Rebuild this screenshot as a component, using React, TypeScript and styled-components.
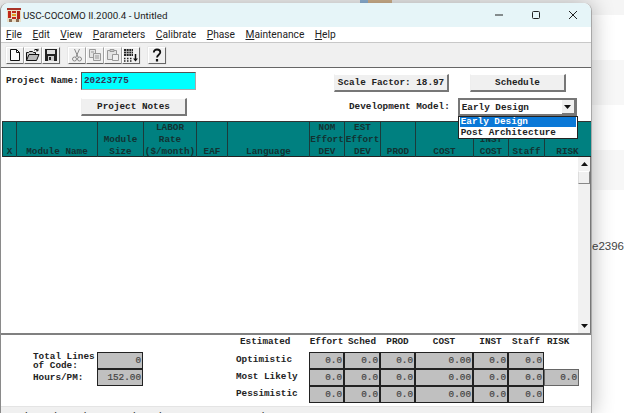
import React from "react";
import styled, { createGlobalStyle } from "styled-components";

const Global = createGlobalStyle`
  html, body { margin: 0; padding: 0; background: #fff; overflow: hidden; }
  * { box-sizing: border-box; }
`;

const mono = `"Liberation Mono", "Courier New", monospace`;
const ui = `Roboto, "Liberation Sans", sans-serif`;

const Desktop = styled.div`
  position: relative;
  width: 644px;
  height: 413px;
  overflow: hidden;
  padding-top: 3px;
  background:
    linear-gradient(to right, #8fb4d8 0 8px, #d3b48f 8px 32px, #eee 32px 100%) 360px 0 / 120px 3px no-repeat,
    linear-gradient(to bottom, #f5f5f5 0 15px, #fff 15px 60px, #f7f7f7 60px 105px, #fff 105px 150px, #f7f7f7 150px 190px, #fff 190px) 0 0 / 624px 100% no-repeat,
    #fff;
`;

const BehindText = styled.span`
  position: absolute;
  left: 592px;
  top: 240px;
  font: 11.5px "Liberation Sans", Arial, sans-serif;
  color: #444;
`;

const Window = styled.div`
  position: relative;
  width: 592px;
  display: flex;
  flex-direction: column;
  border-radius: 8px 8px 0 0;
  background: #fff;
  box-shadow: 0 0 22px rgba(0, 0, 0, 0.3);
  border-right: 1px solid #a8a8a8;
  border-left: 1px solid #8a8a8a;
`;

const TitleBar = styled.div`
  height: 24px;
  display: flex;
  align-items: center;
  background: #e6f5f8;
  border-radius: 8px 8px 0 0;
  padding-left: 6px;
  font: 9.8px ${ui};
  color: #222;
`;

const TitleText = styled.span`
  margin-left: 2px;
  flex: 1;
`;

const WinControls = styled.div`
  display: flex;
  align-items: center;
  gap: 27px;
  padding-right: 13px;
  svg { display: block; }
`;

const MenuBar = styled.div`
  height: 16px;
  display: flex;
  gap: 10.5px;
  align-items: center;
  padding-left: 5px;
  background: #fff;
  border-bottom: 1px solid #c8c8c8;
  font: 10.2px ${ui};
  color: #222;
  u { text-underline-offset: 1px; }
`;

const Toolbar = styled.div`
  height: 25px;
  display: flex;
  align-items: center;
  padding-left: 5px;
  background: #f0f0f0;
  border-bottom: 1px solid #666;
`;

const ToolGroup = styled.div<{ $after?: number }>`
  display: flex;
  margin-right: ${(p) => p.$after ?? 0}px;
`;

const ToolButton = styled.div`
  width: 18px;
  height: 17px;
  display: flex;
  align-items: center;
  justify-content: center;
  background: #f0f0f0;
  border: 1px solid;
  border-color: #fff #666 #666 #fff;
  box-shadow: 0 0 0 0.5px #ddd;
`;

const Form = styled.div`
  display: flex;
  flex-direction: column;
  gap: 6px;
  padding: 4px 0 5px 5px;
  font: bold 9.33px ${mono};
  color: #222;
`;

const FormRow = styled.div`
  display: flex;
  align-items: flex-start;
`;

const Label = styled.span<{ $width?: number; $left?: number; $top?: number }>`
  width: ${(p) => (p.$width ? `${p.$width}px` : "auto")};
  margin-left: ${(p) => p.$left ?? 0}px;
  margin-top: ${(p) => p.$top ?? 0}px;
  white-space: pre;
`;

const NameInput = styled.div`
  width: 115px;
  height: 18px;
  background: #00ffff;
  border: 1px solid;
  border-color: #555 #aaa #aaa #555;
  padding-left: 2px;
  line-height: 16px;
  color: #335;
`;

const PushButton = styled.div<{ $width: number; $left?: number; $top?: number }>`
  width: ${(p) => p.$width}px;
  height: 18px;
  margin-left: ${(p) => p.$left ?? 0}px;
  margin-top: ${(p) => p.$top ?? 0}px;
  display: flex;
  align-items: center;
  justify-content: center;
  background: #f0f0f0;
  border: 1px solid;
  border-color: #fff #777 #777 #eee;
  border-right-width: 2px;
  border-bottom-width: 2px;
`;

const Combo = styled.div`
  position: relative;
  width: 119px;
  height: 18px;
  margin-left: 8px;
  display: flex;
  align-items: center;
  justify-content: space-between;
  padding-left: 2px;
  background: #fff;
  border: 2px solid #777;
  font-size: 9.33px;
`;

const ComboArrow = styled.div`
  width: 13px;
  height: 14px;
  display: flex;
  align-items: center;
  justify-content: center;
  background: #f0f0f0;
  border-right: 1px solid #777;
  border-bottom: 1px solid #777;
`;

const DropDown = styled.div`
  position: absolute;
  top: 16px;
  left: -2px;
  width: 120px;
  height: 23px;
  z-index: 2;
  background: #fff;
  border: 1px solid #222;
  padding: 0 1px;
`;

const DropItem = styled.div<{ $selected?: boolean }>`
  height: 10px;
  margin-bottom: 1px;
  line-height: 10px;
  padding-left: 1px;
  background: ${(p) => (p.$selected ? "#0a78d7" : "transparent")};
  color: ${(p) => (p.$selected ? "#fff" : "#222")};
`;

const widths = [14, 81, 46, 53, 31, 82, 35, 36, 35, 58, 35, 36, 46];

const HeaderGrid = styled.div`
  display: grid;
  grid-template-columns: ${widths.map((w) => `${w}px`).join(" ")};
  height: 36px;
  margin-left: 1px;
  width: 589px;
  background: #008080;
  border-top: 1px solid #333;
  border-bottom: 1px solid #222;
  font: bold 9.33px/12px ${mono};
  color: #123232;
`;

const HeaderCell = styled.div`
  display: flex;
  flex-direction: column;
  justify-content: flex-end;
  align-items: center;
  text-align: center;
  white-space: pre;
  border-left: 1px solid #1c3a3a;
  overflow: visible;
`;

const ListArea = styled.div`
  display: flex;
  justify-content: flex-end;
  height: 178px;
  background: #fff;
  border-bottom: 2px solid #808080;
`;

const ScrollBar = styled.div`
  width: 13px;
  display: flex;
  flex-direction: column;
  background: #f1f1f1;
  border-right: 1px solid #777;
`;

const ScrollButton = styled.div`
  height: 14px;
  display: flex;
  align-items: center;
  justify-content: center;
`;

const ScrollThumb = styled.div`
  height: 13px;
  background: #f0f0f0;
  border: 1px solid;
  border-color: #fff #888 #888 #ddd;
`;

const ScrollSpace = styled.div`
  flex: 1;
`;

const Summary = styled.div`
  display: flex;
  height: 71px;
  font: bold 9.33px ${mono};
  color: #222;
`;

const Totals = styled.div`
  display: grid;
  grid-template-columns: 64px 46px;
  grid-auto-rows: 17px;
  margin: 17px 0 0 32px;
  width: 203px;
`;

const TotalLabel = styled.div`
  line-height: 9px;
  align-self: center;
  white-space: pre;
`;

const Estimates = styled.div`
  display: grid;
  grid-template-columns: 73px 35px 36px 35px 58px 35px 36px 35px;
  grid-auto-rows: 17px;
`;

const ColumnTitle = styled.div<{ $left?: number }>`
  padding: 1px 0 0 ${(p) => p.$left ?? 0}px;
  line-height: 11px;
  text-align: ${(p) => (p.$left === undefined ? "center" : "left")};
  white-space: pre;
`;

const RowTitle = styled.div`
  line-height: 15px;
  white-space: pre;
`;

const Value = styled.div<{ $soft?: boolean }>`
  background: #c0c0c0;
  border: 1px solid ${(p) => (p.$soft ? "#666" : "#222")};
  line-height: 15px;
  text-align: right;
  padding-right: 1px;
  font-weight: normal;
  -webkit-text-stroke: 0.2px #444;
  color: #444;
`;

const Empty = styled.div``;

const StatusEdge = styled.div`
  height: 8px;
  overflow: hidden;
  background: #f0f0f0;
  border-top: 1px solid #e4e4e4;
  padding: 4px 0 0 24px;
  font: 12px/12px "Liberation Sans", Arial, sans-serif;
  color: #333;
  white-space: pre;
`;

const Logo = () => (
  <svg width="14" height="14" viewBox="0 0 14 14">
    <rect width="14" height="14" fill="#eadfc8" />
    <rect x="0" y="0" width="14" height="2" fill="#a83428" />
    <rect x="1" y="3" width="3" height="7" fill="#c02a1a" />
    <rect x="5" y="3" width="4" height="2" fill="#c02a1a" />
    <rect x="5" y="6" width="4" height="2" fill="#e0a020" />
    <rect x="5" y="9" width="4" height="2" fill="#c02a1a" />
    <rect x="10" y="3" width="3" height="8" fill="#b02418" />
    <rect x="2" y="11" width="3" height="3" fill="#8a6a50" />
    <rect x="9" y="11" width="3" height="3" fill="#8a6a50" />
  </svg>
);

const IconNew = () => (
  <svg width="14" height="14" viewBox="0 0 14 14" fill="#fff" stroke="#111">
    <path d="M2.500 1.500h6l3 3v8h-9z" />
    <path d="M8.500 1.500v3h3" fill="none" />
  </svg>
);
const IconOpen = () => (
  <svg width="16" height="14" viewBox="0 0 16 14" fill="none" stroke="#111">
    <path d="M1.500 12.500v-8h2l1-1h3l1 1h2v2" fill="#ccc" />
    <path d="M1.500 12.500l2.500-6h10l-2.500 6z" fill="#bbb" />
    <path d="M9 2.500c1-1.500 3-1.500 4 0M13 .8v2h-2" />
  </svg>
);
const IconSave = () => (
  <svg width="14" height="14" viewBox="0 0 14 14">
    <rect x="1" y="1" width="12" height="12" fill="#222" />
    <rect x="3" y="2" width="8" height="4" fill="#ddd" />
    <rect x="4" y="8" width="6" height="5" fill="#ccc" />
    <rect x="5" y="9" width="2" height="3" fill="#222" />
  </svg>
);
const IconCut = () => (
  <svg width="14" height="14" viewBox="0 0 14 14" fill="none" stroke="#888">
    <path d="M4.500 1l3.500 8M9.500 1L6 9" />
    <circle cx="4.500" cy="11" r="2" />
    <circle cx="9.500" cy="11" r="2" />
  </svg>
);
const IconCopy = () => (
  <svg width="14" height="14" viewBox="0 0 14 14" fill="#e4e4e4" stroke="#999">
    <path d="M1.500 1.500h6v8h-6z" />
    <path d="M5.500 5.500h7v7h-7z" />
    <path d="M3 4h3M7 8h4M7 10h4" fill="none" />
  </svg>
);
const IconPaste = () => (
  <svg width="14" height="14" viewBox="0 0 14 14" fill="#e4e4e4" stroke="#999">
    <path d="M1.500 2.500h9v9h-9z" />
    <path d="M4 1.500h4v2H4z" fill="#ccc" />
    <path d="M6.500 6.500h6v6h-6z" fill="#f0f0f0" />
  </svg>
);
const IconSchedule = () => (
  <svg width="16" height="15" viewBox="0 0 16 15">
    <path d="M1 1h9v7H1z" fill="#222" />
    <path d="M3.500 1v7M6 1v7M8.500 1v7M1 3.500h9M1 5.500h9" stroke="#ccc" strokeWidth="0.7" />
    <path d="M1 10.500h1.500M4 10.500h1.500M7 10.500h1.500M1 13h1.500M4 13h1.500M7 13h1.500" stroke="#222" strokeWidth="1.4" />
    <path d="M12.500 6v6" stroke="#111" strokeWidth="1.5" />
    <path d="M10 10.500h5l-2.500 3z" fill="#111" />
  </svg>
);
const IconHelp = () => (
  <svg width="14" height="15" viewBox="0 0 14 15" fill="none" stroke="#111" strokeWidth="1.8">
    <path d="M3.800 4.500C3.800 2.500 5.300 1.500 7 1.500s3.300 1 3.300 2.800c0 2.200-3.300 2.700-3.300 5.200" />
    <path d="M7 11v2.500" strokeWidth="2.2" />
  </svg>
);

const TriDown = () => (
  <svg width="7" height="4" viewBox="0 0 7 4"><path d="M0 0h7L3.500 4z" fill="#111" /></svg>
);
const TriUp = () => (
  <svg width="7" height="4" viewBox="0 0 7 4"><path d="M0 4h7L3.500 0z" fill="#111" /></svg>
);

const headers = [
  "X",
  "Module Name",
  "Module\nSize",
  "LABOR\nRate\n($/month)",
  "EAF",
  "Language",
  "NOM\nEffort\nDEV",
  "EST\nEffort\nDEV",
  "PROD",
  "COST",
  "INST\nCOST",
  "Staff",
  "RISK",
];

const menus: [string, string][] = [
  ["F", "ile"],
  ["E", "dit"],
  ["V", "iew"],
  ["P", "arameters"],
  ["C", "alibrate"],
  ["P", "hase"],
  ["M", "aintenance"],
  ["H", "elp"],
];

const rows: { label: string; risk?: boolean }[] = [
  { label: "Optimistic" },
  { label: "Most Likely", risk: true },
  { label: "Pessimistic" },
];

const cells = ["0.0", "0.0", "0.0", "0.00", "0.0", "0.0"];

export default function App() {
  return (
    <Desktop>
      <Global />
      <BehindText>e2396</BehindText>
      <Window>
        <TitleBar>
          <Logo />
          <TitleText>USC-COCOMO II.2000.4 - Untitled</TitleText>
          <WinControls>
            <svg width="10" height="10" viewBox="0 0 10 10"><path d="M1 5h8" stroke="#222" /></svg>
            <svg width="10" height="10" viewBox="0 0 10 10" fill="none"><rect x="1.500" y="1.500" width="7" height="7" rx="1" stroke="#222" /></svg>
            <svg width="10" height="10" viewBox="0 0 10 10"><path d="M1 1l8 8M9 1l-8 8" stroke="#222" /></svg>
          </WinControls>
        </TitleBar>
        <MenuBar>
          {menus.map(([a, b], i) => (
            <span key={i}><u>{a}</u>{b}</span>
          ))}
        </MenuBar>
        <Toolbar>
          <ToolGroup $after={8}>
            <ToolButton><IconNew /></ToolButton>
            <ToolButton><IconOpen /></ToolButton>
            <ToolButton><IconSave /></ToolButton>
          </ToolGroup>
          <ToolGroup $after={8}>
            <ToolButton><IconCut /></ToolButton>
            <ToolButton><IconCopy /></ToolButton>
            <ToolButton><IconPaste /></ToolButton>
            <ToolButton><IconSchedule /></ToolButton>
          </ToolGroup>
          <ToolGroup>
            <ToolButton><IconHelp /></ToolButton>
          </ToolGroup>
        </Toolbar>
        <Form>
          <FormRow>
            <Label $width={75} $top={3}>Project Name:</Label>
            <NameInput>20223775</NameInput>
            <PushButton $width={115} $left={138} $top={2}>Scale Factor: 18.97</PushButton>
            <PushButton $width={96} $left={21} $top={2}>Schedule</PushButton>
          </FormRow>
          <FormRow>
            <PushButton $width={106} $left={75}>Project Notes</PushButton>
            <Label $left={162} $top={3}>Development Model:</Label>
            <Combo>
              Early Design
              <ComboArrow><TriDown /></ComboArrow>
              <DropDown>
                <DropItem $selected>Early Design</DropItem>
                <DropItem>Post Architecture</DropItem>
              </DropDown>
            </Combo>
          </FormRow>
        </Form>
        <HeaderGrid>
          {headers.map((h) => (
            <HeaderCell key={h}>{h}</HeaderCell>
          ))}
        </HeaderGrid>
        <ListArea>
          <ScrollBar>
            <ScrollButton><TriUp /></ScrollButton>
            <ScrollThumb />
            <ScrollSpace />
            <ScrollButton><TriDown /></ScrollButton>
          </ScrollBar>
        </ListArea>
        <Summary>
          <Totals>
            <TotalLabel>{"Total Lines\nof Code:"}</TotalLabel>
            <Value>0</Value>
            <TotalLabel>Hours/PM:</TotalLabel>
            <Value>152.00</Value>
          </Totals>
          <Estimates>
            <ColumnTitle $left={4}>Estimated</ColumnTitle>
            <ColumnTitle>Effort</ColumnTitle>
            <ColumnTitle>Sched</ColumnTitle>
            <ColumnTitle>PROD</ColumnTitle>
            <ColumnTitle>COST</ColumnTitle>
            <ColumnTitle>INST</ColumnTitle>
            <ColumnTitle>Staff</ColumnTitle>
            <ColumnTitle $left={3}>RISK</ColumnTitle>
            {rows.map((r) => (
              <React.Fragment key={r.label}>
                <RowTitle>{r.label}</RowTitle>
                {cells.map((c, i) => (
                  <Value key={i}>{c}</Value>
                ))}
                {r.risk ? <Value $soft>0.0</Value> : <Empty />}
              </React.Fragment>
            ))}
          </Estimates>
        </Summary>
        <StatusEdge>{"l        l        l              l       l                              l"}</StatusEdge>
      </Window>
    </Desktop>
  );
}
